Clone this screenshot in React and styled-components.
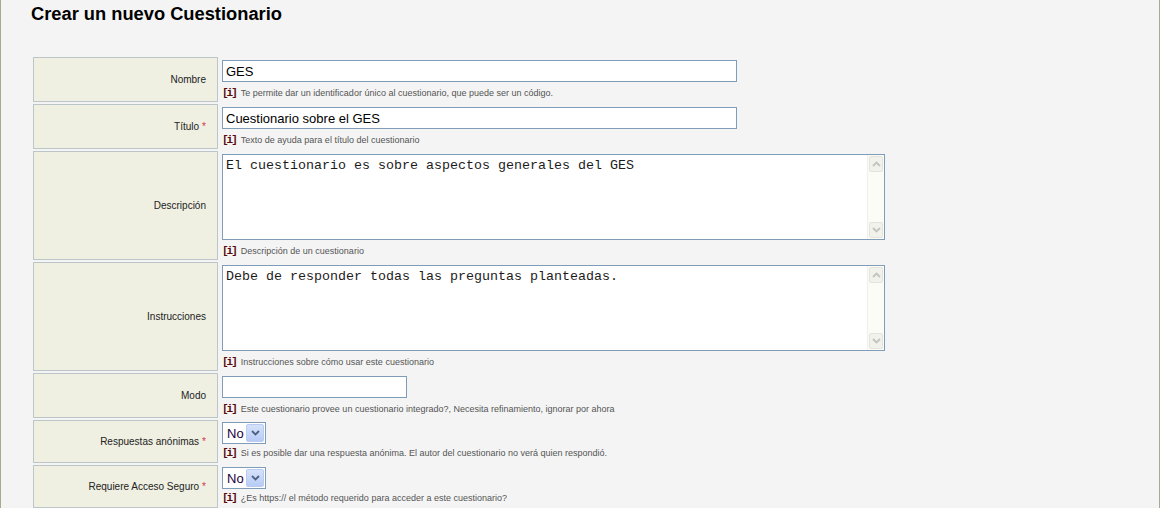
import React from "react";
import styled, { createGlobalStyle } from "styled-components";

const GlobalStyle = createGlobalStyle`
  body {
    margin: 0;
    background: #fff;
  }
`;

const Page = styled.div`
  box-sizing: border-box;
  width: 1160px;
  min-height: 508px;
  background: #f4f4f4;
  border-left: 1px solid #a4ac94;
  border-right: 1px solid #a4ac94;
  padding-left: 30px;
  overflow: hidden;
`;

const Title = styled.h2`
  margin: 3px 0 0;
  font: bold 18.3px/21px "Liberation Sans", Arial, sans-serif;
  color: #000;
`;

const Form = styled.form`
  display: flex;
  flex-direction: column;
  gap: 2px;
  margin: 33px 0 0 2px;
`;

const Row = styled.div`
  display: grid;
  grid-template-columns: 185px 1fr;
  column-gap: 2px;
`;

const LabelCell = styled.div`
  box-sizing: border-box;
  height: ${(p) => p.$h}px;
  background: #eff0e2;
  border: 1px solid #bcc6c9;
  display: flex;
  align-items: center;
  justify-content: flex-end;
  padding-right: 11px;
  font: 10px "Liberation Sans", Arial, sans-serif;
  color: #222;
`;

const Star = styled.span`
  color: #d8304c;
  margin-left: 3px;
`;

const FieldCell = styled.div`
  padding: ${(p) => p.$top}px 0 0 2px;
`;

const TextBox = styled.input`
  box-sizing: border-box;
  display: block;
  width: ${(p) => p.$w}px;
  height: 22px;
  border: 1px solid #7f9db9;
  background: #fff;
  padding: 0 3px;
  font: 13px "Liberation Sans", Arial, sans-serif;
  color: #000;
  outline: none;
`;

const AreaBox = styled.div`
  box-sizing: border-box;
  display: flex;
  width: 663px;
  height: 86px;
  border: 1px solid #7f9db9;
  background: #fff;
`;

const Area = styled.textarea`
  flex: 1;
  border: none;
  resize: none;
  outline: none;
  overflow: hidden;
  padding: 3px 3px;
  margin: 0;
  font: 13.333px/15px "Liberation Mono", "Courier New", monospace;
  color: #1c1c1c;
`;

const ScrollTrack = styled.div`
  width: 17px;
  background: #fcfcf6;
  border-left: 1px solid #f0f0ea;
  display: flex;
  flex-direction: column;
  justify-content: space-between;
  padding: 1px 0;
  box-sizing: border-box;
`;

const ScrollBtn = styled.div`
  height: 16px;
  margin: 0 1px;
  border: 1px solid #e4e4dc;
  border-radius: 2px;
  background: #f2f2ec;
  box-sizing: border-box;
  display: flex;
  align-items: center;
  justify-content: center;
`;

const SelectBox = styled.div`
  box-sizing: border-box;
  width: 44px;
  height: 22px;
  border: 1px solid #7f9db9;
  background: #fff;
  display: flex;
  align-items: center;
  justify-content: space-between;
  padding: 1px;
  font: 13px "Liberation Sans", Arial, sans-serif;
  color: #1a0040;
`;

const SelectText = styled.span`
  padding-left: 3px;
`;

const SelectBtn = styled.div`
  width: 18px;
  height: 18px;
  box-sizing: border-box;
  border: 1px solid #b9cbf3;
  border-radius: 2px;
  background: linear-gradient(#d6e2fb, #b7cbf5);
  display: flex;
  align-items: center;
  justify-content: center;
`;

const Hint = styled.div`
  margin-top: ${(p) => p.$gap}px;
  font: 9px/14px "Liberation Sans", Arial, sans-serif;
  color: #555;
  white-space: nowrap;
`;

const InfoMark = styled.span`
  font: bold 11px "Liberation Mono", "Courier New", monospace;
  color: #5a0a0a;
  letter-spacing: -2px;
  margin-right: 5px;
`;

const Chevron = ({ up, color = "#4d6185" }) => (
  <svg width="9" height="6" viewBox="0 0 9 6">
    <path
      d={up ? "M1 5 L4.5 1.5 L8 5" : "M1 1 L4.5 4.5 L8 1"}
      fill="none"
      stroke={color}
      strokeWidth="1.8"
    />
  </svg>
);

const HintLine = ({ text, gap = 3 }) => (
  <Hint $gap={gap}>
    <InfoMark>[i]</InfoMark>
    {text}
  </Hint>
);

const Label = ({ h, required, children }) => (
  <LabelCell $h={h}>
    {children}
    {required && <Star>*</Star>}
  </LabelCell>
);

const TextArea = ({ value }) => (
  <AreaBox>
    <Area defaultValue={value} />
    <ScrollTrack>
      <ScrollBtn>
        <Chevron up color="#c4c4bc" />
      </ScrollBtn>
      <ScrollBtn>
        <Chevron color="#c4c4bc" />
      </ScrollBtn>
    </ScrollTrack>
  </AreaBox>
);

const Select = ({ value }) => (
  <SelectBox>
    <SelectText>{value}</SelectText>
    <SelectBtn>
      <Chevron />
    </SelectBtn>
  </SelectBox>
);

export default function App() {
  return (
    <>
      <GlobalStyle />
      <Page>
        <Title>Crear un nuevo Cuestionario</Title>
        <Form>
          <Row>
            <Label h={45}>Nombre</Label>
            <FieldCell $top={3}>
              <TextBox $w={515} defaultValue="GES" />
              <HintLine
                gap={4}
                text="Te permite dar un identificador único al cuestionario, que puede ser un código."
              />
            </FieldCell>
          </Row>
          <Row>
            <Label h={45} required>
              Título
            </Label>
            <FieldCell $top={3}>
              <TextBox $w={515} defaultValue="Cuestionario sobre el GES" />
              <HintLine gap={4} text="Texto de ayuda para el título del cuestionario" />
            </FieldCell>
          </Row>
          <Row>
            <Label h={109}>Descripción</Label>
            <FieldCell $top={3}>
              <TextArea value="El cuestionario es sobre aspectos generales del GES" />
              <HintLine gap={4} text="Descripción de un cuestionario" />
            </FieldCell>
          </Row>
          <Row>
            <Label h={109}>Instrucciones</Label>
            <FieldCell $top={3}>
              <TextArea value="Debe de responder todas las preguntas planteadas." />
              <HintLine gap={4} text="Instrucciones sobre cómo usar este cuestionario" />
            </FieldCell>
          </Row>
          <Row>
            <Label h={45}>Modo</Label>
            <FieldCell $top={3}>
              <TextBox $w={185} defaultValue="" />
              <HintLine
                gap={4}
                text="Este cuestionario provee un cuestionario integrado?, Necesita refinamiento, ignorar por ahora"
              />
            </FieldCell>
          </Row>
          <Row>
            <Label h={43} required>
              Respuestas anónimas
            </Label>
            <FieldCell $top={2}>
              <Select value="No" />
              <HintLine
                gap={2}
                text="Si es posible dar una respuesta anónima. El autor del cuestionario no verá quien respondió."
              />
            </FieldCell>
          </Row>
          <Row>
            <Label h={43} required>
              Requiere Acceso Seguro
            </Label>
            <FieldCell $top={2}>
              <Select value="No" />
              <HintLine
                gap={2}
                text="¿Es https:// el método requerido para acceder a este cuestionario?"
              />
            </FieldCell>
          </Row>
        </Form>
      </Page>
    </>
  );
}
